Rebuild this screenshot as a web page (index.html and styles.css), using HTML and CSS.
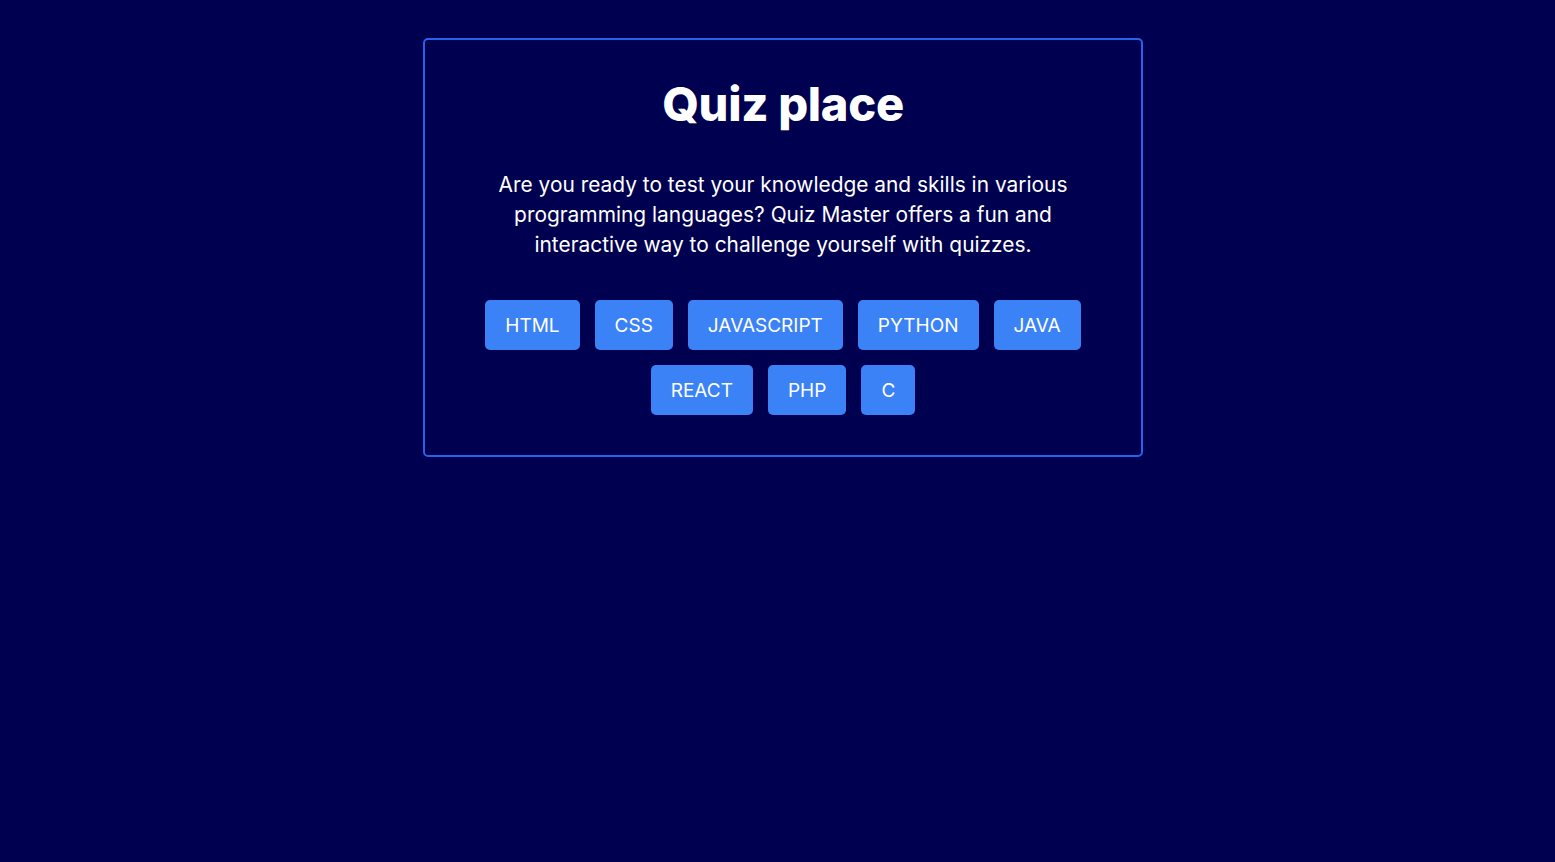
FILE: index.html
```html
<!DOCTYPE html>
<html lang="en">
<head>
<meta charset="utf-8">
<title>Quiz place</title>
<link rel="stylesheet" href="styles.css">
</head>
<body>
<main class="page">
  <section class="card">
    <h1 class="title">Quiz place</h1>
    <p class="intro">Are you ready to test your knowledge and skills in various programming languages? Quiz Master offers a fun and interactive way to challenge yourself with quizzes.</p>
    <div class="topics">
      <button class="topic">HTML</button>
      <button class="topic">CSS</button>
      <button class="topic">JAVASCRIPT</button>
      <button class="topic">PYTHON</button>
      <button class="topic">JAVA</button>
      <button class="topic">REACT</button>
      <button class="topic">PHP</button>
      <button class="topic">C</button>
    </div>
  </section>
</main>
</body>
</html>
```

FILE: styles.css
```css
html, body {
  margin: 0;
  padding: 0;
  background: #000050;
  min-height: 100%;
}
body {
  font-family: Inter, "Open Sans", "Liberation Sans", sans-serif;
  color: #ffffff;
}
.page {
  padding: 38px 0 0 11px;
  display: flex;
  justify-content: center;
}
.card {
  box-sizing: border-box;
  width: 720px;
  border: 2px solid #2563eb;
  border-radius: 5px;
  padding: 36px 40px 40px;
  display: flex;
  flex-direction: column;
  align-items: center;
}
.title {
  margin: 0;
  font-size: 47px;
  line-height: 56px;
  font-weight: 800;
  letter-spacing: -0.3px;
}
.intro {
  margin: 38px 0 0;
  max-width: 600px;
  text-align: center;
  font-size: 20.9px;
  line-height: 30px;
}
.topics {
  margin-top: 40px;
  display: flex;
  flex-wrap: wrap;
  justify-content: center;
  gap: 15px;
}
.topic {
  height: 50px;
  padding: 0 20px;
  border: none;
  border-radius: 5px;
  background: #3b82f6;
  color: #ffffff;
  font-family: inherit;
  font-size: 19px;
  cursor: pointer;
}
```
